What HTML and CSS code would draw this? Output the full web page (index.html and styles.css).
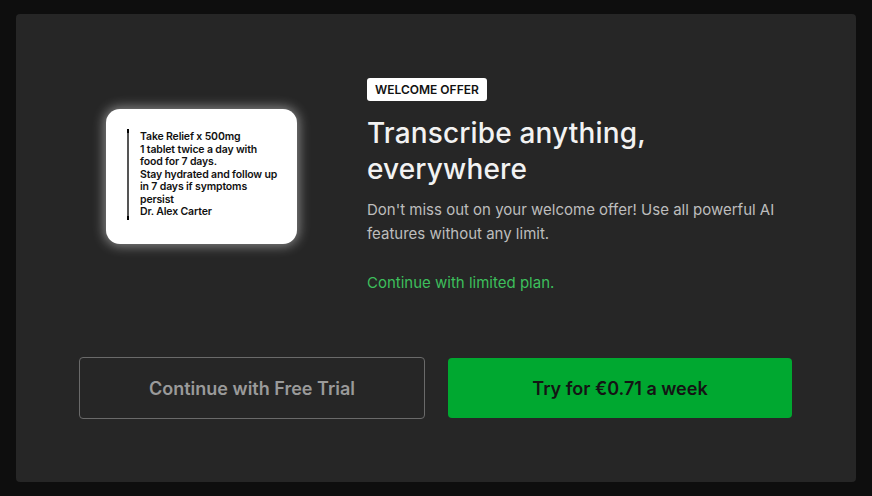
FILE: index.html
```html
<!DOCTYPE html>
<html>
<head>
<meta charset="utf-8">
<link rel="stylesheet" href="styles.css">
</head>
<body>
<div class="card">
  <div class="top">
    <div class="receipt">
      <div class="bar"></div>
      <div class="note">
        <div>Take Relief x 500mg</div>
        <div>1 tablet twice a day with</div>
        <div>food for 7 days.</div>
        <div>Stay hydrated and follow up</div>
        <div>in 7 days if symptoms</div>
        <div>persist</div>
        <div>Dr. Alex Carter</div>
      </div>
    </div>
    <div class="info">
      <span class="badge">WELCOME OFFER</span>
      <h1 class="title">Transcribe anything,<br>everywhere</h1>
      <p class="desc">Don't miss out on your welcome offer! Use all powerful AI features without any limit.</p>
      <a class="limited">Continue with limited plan.</a>
    </div>
  </div>
  <div class="actions">
    <button class="btn btn-outline">Continue with Free Trial</button>
    <button class="btn btn-green">Try for €0.71 a week</button>
  </div>
</div>
</body>
</html>
```

FILE: styles.css
```css
html, body {
  margin: 0;
  padding: 0;
  background: #0e0e0e;
  font-family: Inter, "Noto Sans", sans-serif;
}
body {
  padding: 14px 16px;
}
.card {
  width: 840px;
  height: 468px;
  box-sizing: border-box;
  background: #262626;
  border-radius: 4px;
  padding: 64px 64px 0 63px;
  display: flex;
  flex-direction: column;
}
.top {
  display: flex;
  align-items: flex-start;
}
.receipt {
  margin-left: 27px;
  margin-top: 31px;
  width: 191px;
  height: 135px;
  box-sizing: border-box;
  background: #fff;
  border-radius: 14px;
  box-shadow: 0 0 12px 2px rgba(255, 255, 255, 0.45);
  padding: 20px 10px 0 21px;
  display: flex;
}
.bar {
  position: relative;
  width: 2px;
  height: 91px;
  background: #555;
  flex: none;
}
.bar::before,
.bar::after {
  content: "";
  position: absolute;
  left: 0;
  width: 2px;
  height: 4px;
  background: #000;
}
.bar::before { top: 0; }
.bar::after { bottom: 0; }
.note {
  margin-left: 11px;
  margin-top: 2px;
  font-size: 10.5px;
  font-weight: 600;
  line-height: 12.5px;
  color: #111;
  letter-spacing: -0.15px;
  white-space: nowrap;
}
.info {
  margin-left: 70px;
  display: flex;
  flex-direction: column;
  align-items: flex-start;
}
.badge {
  display: inline-block;
  background: #fff;
  color: #111;
  font-size: 12px;
  font-weight: 600;
  height: 23px;
  line-height: 23px;
  padding: 0 8px;
  border-radius: 3px;
}
.title {
  margin: 14px 0 0;
  font-size: 28px;
  font-weight: 500;
  line-height: 36px;
  color: #f2f2f2;
  letter-spacing: 0.15px;
}
.desc {
  margin: 11px 0 0;
  width: 420px;
  font-size: 15px;
  line-height: 24px;
  color: #bdbdbd;
}
.limited {
  margin-top: 25px;
  font-size: 15px;
  line-height: 24px;
  color: #3dbf5c;
  cursor: pointer;
}
.actions {
  display: flex;
  gap: 23px;
  margin-top: 62px;
  align-items: center;
}
.btn {
  font-family: Inter, "Noto Sans", sans-serif;
  font-size: 18px;
  font-weight: 600;
  border-radius: 4px;
  cursor: pointer;
}
.btn-outline {
  width: 346px;
  height: 62px;
  background: transparent;
  border: 1px solid #6a6a6a;
  color: #9a9a9a;
}
.btn-green {
  width: 344px;
  height: 60px;
  background: #00a830;
  border: none;
  color: #141414;
}
```
